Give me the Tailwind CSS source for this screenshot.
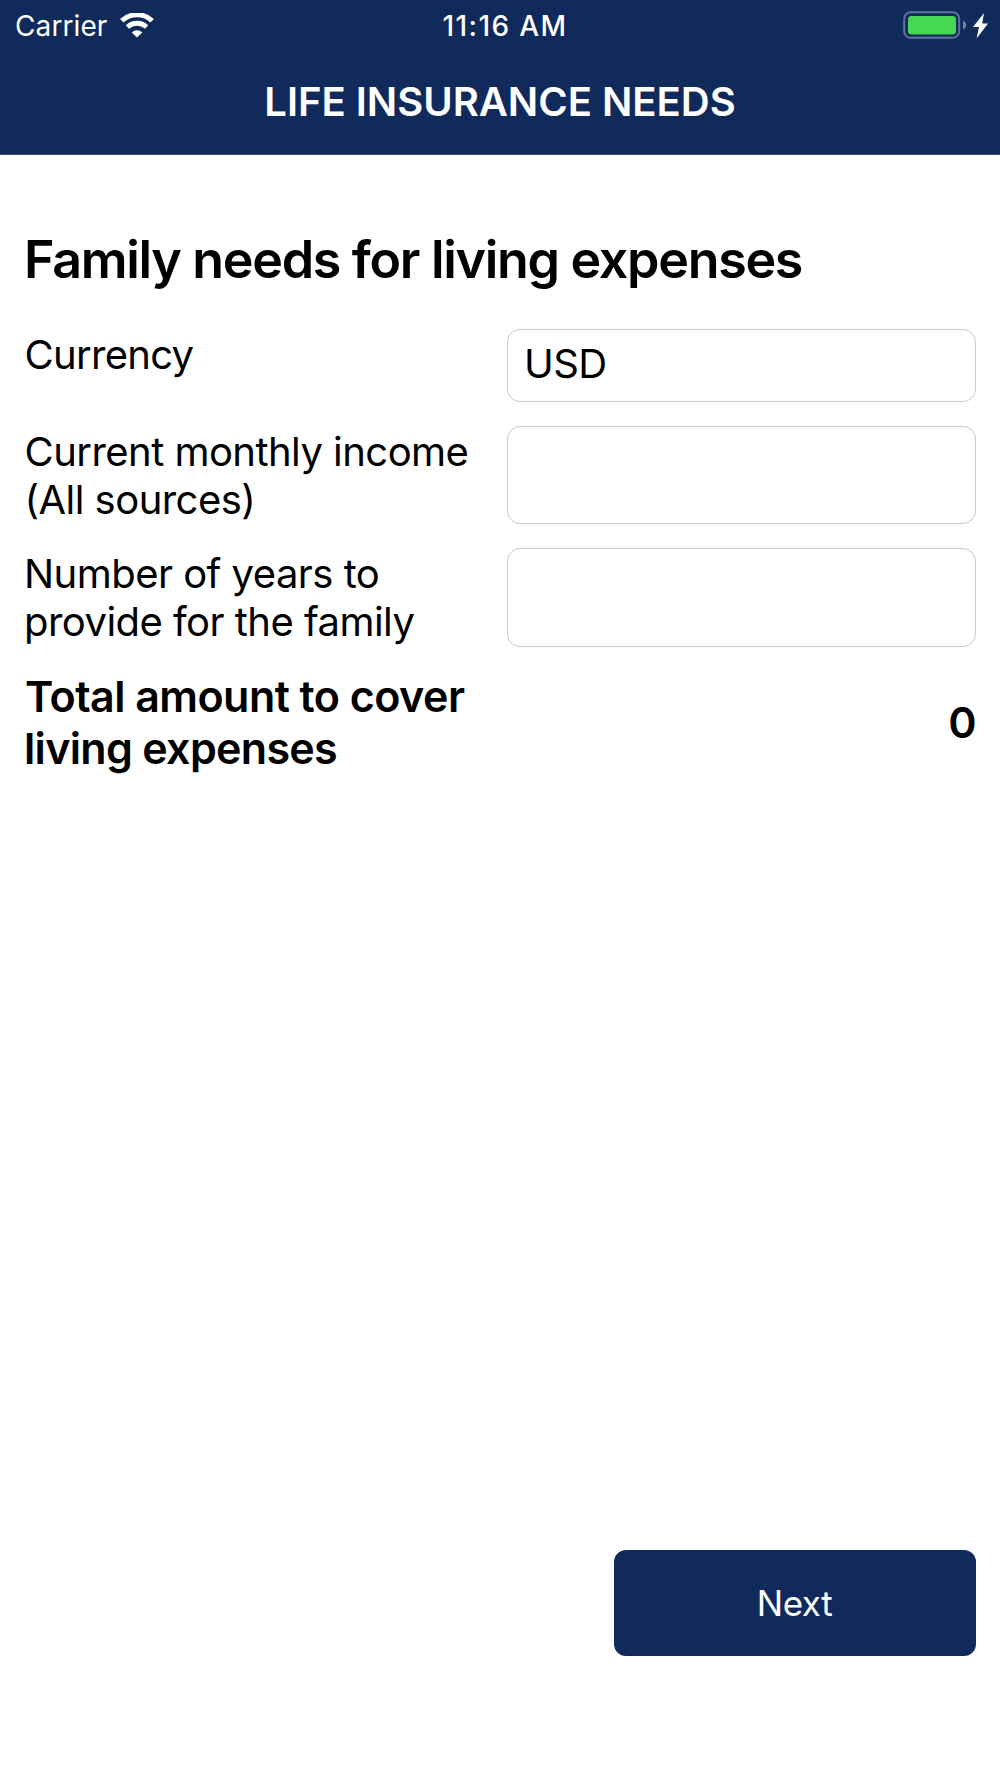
<!DOCTYPE html>
<html lang="en">
<head>
    <meta charset="utf-8">
    <meta name="viewport" content="width=device-width, initial-scale=1">
    <title>Life Insurance Needs</title>
    <script src="https://cdn.jsdelivr.net/npm/@tailwindcss/browser@4"></script>
</head>
<body class="bg-white">
<div class="flex flex-col h-[1778px] w-[1000px] overflow-hidden font-[Inter,sans-serif] text-black">
    <header class="h-[155px] bg-[#0f2a5b] text-white border-b border-[#3c5079]">
        <!-- status bar -->
        <div class="grid grid-cols-3 h-[50px] items-center pl-[15px] pr-[12px]">
            <div class="flex items-center pt-px">
                <span class="text-[28px] leading-[50px] tracking-[0.1px]">Carrier</span>
                <svg class="ml-[13px] w-[34px] h-[25px] -mt-[2px]" viewBox="0 0 34 25" fill="none" stroke="#fff">
                    <path d="M1.8 7.8 A22 22 0 0 1 32.2 7.8" stroke-width="5"/>
                    <path d="M7.4 14 A14.2 14.2 0 0 1 26.6 14" stroke-width="4.8"/>
                    <path d="M17 24.6 L11.7 19.4 A7.6 7.6 0 0 1 22.3 19.4 Z" fill="#fff" stroke="none"/>
                </svg>
            </div>
            <div class="text-center text-[28px] leading-[50px] font-medium tracking-[1.4px] pl-[7px]">11:16 AM</div>
            <div class="flex items-center justify-end -mt-[2px]">
                <svg class="w-[85px] h-[28px]" viewBox="0 0 85 28">
                    <rect x="1.2" y="1.2" width="55" height="25.6" rx="6.5" fill="none" stroke="#5f7599" stroke-width="2"/>
                    <rect x="5" y="5" width="48" height="18.4" rx="3.4" fill="#46d753"/>
                    <path d="M60 9.4 Q63.2 11 63.2 14 Q63.2 17 60 18.6 Z" fill="#6f83a3"/>
                    <path d="M81 2 L70 16 H76 L73.6 27.4 L85 12.4 H79.2 Z" fill="#fff"/>
                </svg>
            </div>
        </div>
        <h1 class="text-center text-[40px] leading-[104px] font-semibold">LIFE INSURANCE NEEDS</h1>
    </header>

    <main class="flex flex-col grow px-6 pt-[73px]">
        <h2 class="text-[52px] leading-[64px] font-semibold tracking-[-1.32px] whitespace-nowrap">Family needs for living expenses</h2>

        <form class="flex flex-col gap-6 mt-[37px] text-[40px] leading-[48px] tracking-[-0.54px]">
            <div class="grid grid-cols-[459px_469px] gap-6 h-[73px]">
                <label for="currency" class="pt-[2px] pl-[0.5px] tracking-[-0.7px]">Currency</label>
                <input id="currency" type="text" value="USD" class="border border-[#c9c9c9] rounded-[13px] px-[16px] pb-[3px]">
            </div>
            <div class="grid grid-cols-[459px_469px] gap-6 h-[98px]">
                <label for="income" class="pt-[2px] pl-[0.5px] whitespace-nowrap">Current monthly income<br>(All sources)</label>
                <input id="income" type="text" class="border border-[#c9c9c9] rounded-[13px] px-[17px]">
            </div>
            <div class="grid grid-cols-[459px_469px] gap-6 h-[99px]">
                <label for="years" class="pt-[2px] whitespace-nowrap">Number of years to<br>provide for the family</label>
                <input id="years" type="text" class="border border-[#c9c9c9] rounded-[13px] px-[17px]">
            </div>
            <div class="flex items-center justify-between text-[43px] leading-[51.5px] font-semibold">
                <p class="pl-px whitespace-nowrap">Total amount to cover<br><span class="-ml-px tracking-[-0.68px]">living expenses</span></p>
                <output>0</output>
            </div>
        </form>

        <button type="button" class="self-end mt-auto mb-[122px] w-[362px] h-[106px] rounded-[12px] bg-[#0f2a5b] text-white text-[35px] tracking-[-0.4px] pr-px">Next</button>
    </main>
</div>
</body>
</html>
